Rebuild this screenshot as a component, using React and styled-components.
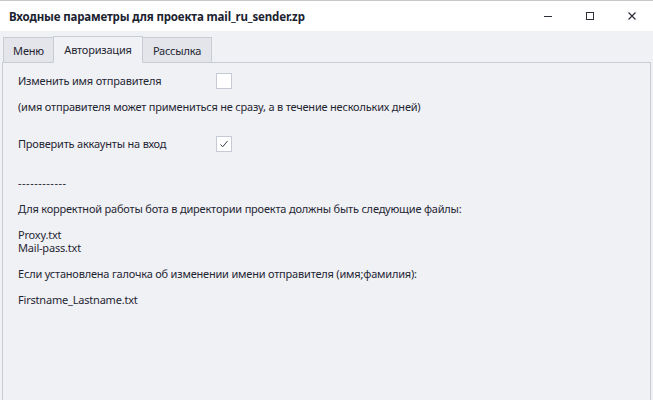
import React from 'react';
import styled, { createGlobalStyle } from 'styled-components';

const GlobalStyle = createGlobalStyle`
  html, body {
    margin: 0;
    padding: 0;
    width: 653px;
    height: 400px;
    overflow: hidden;
    background: #f0f1f5;
  }
  body {
    font-family: "Noto Sans", "Liberation Sans", sans-serif;
    color: #1f2633;
  }
`;

const Window = styled.div`
  width: 653px;
  height: 400px;
  display: flex;
  flex-direction: column;
  background: #f0f1f5;
  border-top: 1px solid #c9c9cc;
  box-sizing: border-box;
`;

const TitleBar = styled.div`
  height: 30px;
  background: #ffffff;
  display: flex;
  align-items: center;
  padding-left: 9px;
  flex-shrink: 0;
`;

const Title = styled.div`
  flex: 1;
  font-size: 11.5px;
  font-weight: 700;
  letter-spacing: -0.15px;
  color: #1b2230;
`;

const Controls = styled.div`
  display: flex;
  height: 100%;
`;

const ControlButton = styled.div`
  width: 42px;
  height: 100%;
  display: flex;
  align-items: center;
  justify-content: center;
`;

const TabStrip = styled.div`
  display: flex;
  align-items: flex-end;
  padding: 4px 0 0 3px;
  height: 31px;
  box-sizing: border-box;
  flex-shrink: 0;
`;

const Tab = styled.div`
  width: ${p => p.w}px;
  height: ${p => (p.active ? '27px' : '26px')};
  box-sizing: border-box;
  display: flex;
  align-items: center;
  justify-content: center;
  font-size: 11px;
  letter-spacing: -0.2px;
  color: #1f2633;
  background: ${p => (p.active ? '#f0f1f5' : '#e3e5ea')};
  border: 1px solid #c8ccd3;
  border-bottom: ${p => (p.active ? '1px solid #f0f1f5' : '1px solid #c8ccd3')};
  margin-bottom: -1px;
  position: relative;
  z-index: ${p => (p.active ? 2 : 1)};
  & + & {
    margin-left: -1px;
  }
`;

const Panel = styled.div`
  flex: 1;
  margin: 0 2px 0 2px;
  border: 1px solid #c8ccd3;
  border-bottom: none;
  padding: 10px 15px 0 15px;
  font-size: 11px;
  letter-spacing: -0.2px;
`;

const OptionRow = styled.div`
  display: flex;
  align-items: center;
  height: 16px;
  margin-top: ${p => p.top || 0}px;
`;

const OptionLabel = styled.div`
  width: 198px;
  line-height: 16px;
`;

const Checkbox = styled.div`
  width: 16px;
  height: 16px;
  box-sizing: border-box;
  border: 1px solid #c5cad6;
  background: #ffffff;
  display: flex;
  align-items: center;
  justify-content: center;
`;

const Note = styled.div`
  line-height: 16px;
  margin-top: ${p => p.top || 0}px;
`;

const Info = styled.div`
  white-space: pre;
  line-height: 13px;
  margin-top: ${p => p.top || 0}px;
`;

const Divider = styled.span`
  letter-spacing: 0.5px;
`;

export default function App() {
  return (
    <>
      <GlobalStyle />
      <Window>
        <TitleBar>
          <Title>Входные параметры для проекта mail_ru_sender.zp</Title>
          <Controls>
            <ControlButton>
              <svg width="10" height="10" viewBox="0 0 10 10">
                <path d="M1 5.5h8" stroke="#2a2f38" strokeWidth="1" />
              </svg>
            </ControlButton>
            <ControlButton>
              <svg width="10" height="10" viewBox="0 0 10 10">
                <rect x="1.5" y="1.5" width="7" height="7" fill="none" stroke="#2a2f38" strokeWidth="1" />
              </svg>
            </ControlButton>
            <ControlButton>
              <svg width="10" height="10" viewBox="0 0 10 10">
                <path d="M1.5 1.5l7 7M8.5 1.5l-7 7" stroke="#2a2f38" strokeWidth="1.2" />
              </svg>
            </ControlButton>
          </Controls>
        </TitleBar>
        <TabStrip>
          <Tab w={51}>Меню</Tab>
          <Tab active w={90}>Авторизация</Tab>
          <Tab w={70}>Рассылка</Tab>
        </TabStrip>
        <Panel>
          <OptionRow>
            <OptionLabel>Изменить имя отправителя</OptionLabel>
            <Checkbox />
          </OptionRow>
          <Note top={10}>(имя отправителя может примениться не сразу, а в течение нескольких дней)</Note>
          <OptionRow top={21}>
            <OptionLabel>Проверить аккаунты на вход</OptionLabel>
            <Checkbox>
              <svg width="10" height="10" viewBox="0 0 10 10">
                <path d="M1.5 5.5l2.2 2.3L8.5 2" fill="none" stroke="#3a3f48" strokeWidth="1" />
              </svg>
            </Checkbox>
          </OptionRow>
          <Info top={24}>
            <Divider>------------</Divider>
            {`

Для корректной работы бота в директории проекта должны быть следующие файлы:

Proxy.txt
Mail-pass.txt

Если установлена галочка об изменении имени отправителя (имя;фамилия):

Firstname_Lastname.txt`}
          </Info>
        </Panel>
      </Window>
    </>
  );
}
